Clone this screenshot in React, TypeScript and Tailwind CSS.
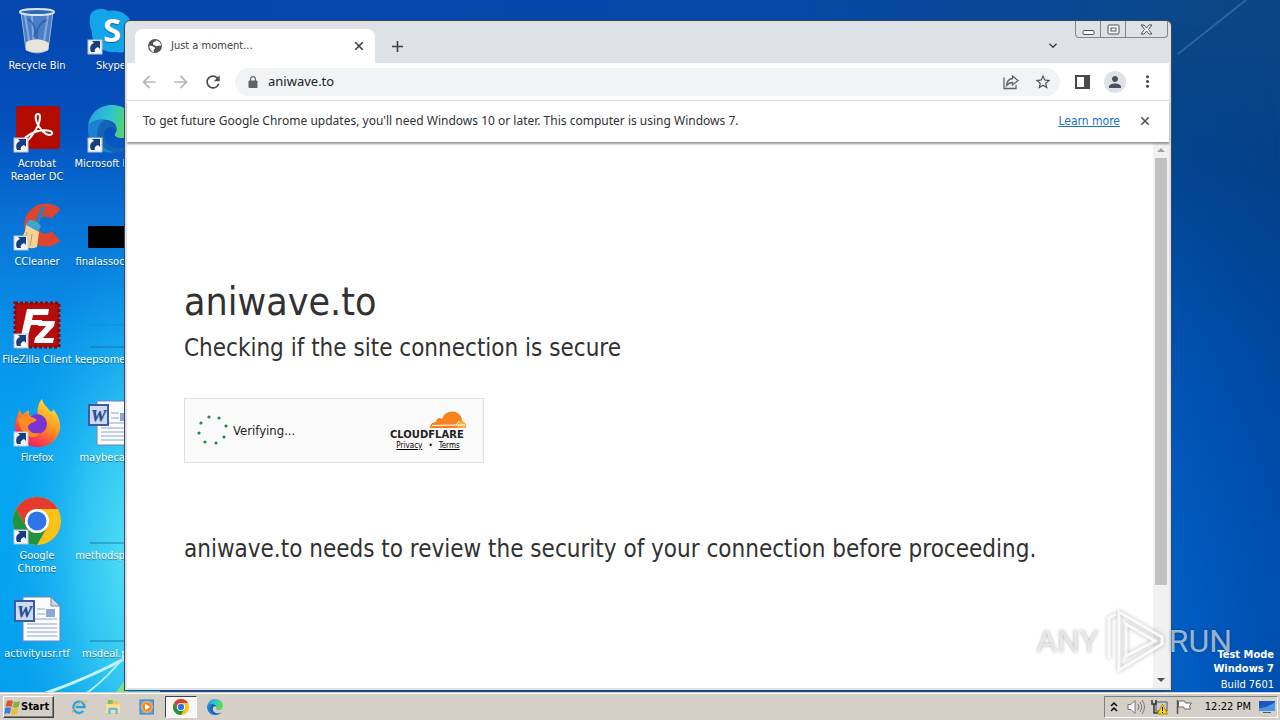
import type { ReactNode } from "react";
import {
  MdArrowBack,
  MdArrowForward,
  MdRefresh,
  MdStarBorder,
  MdPerson,
  MdMoreVert,
  MdAdd,
  MdExpandMore,
} from "react-icons/md";

function Wallpaper() {
  return (
    <svg className="absolute inset-0 h-full w-full" viewBox="0 0 1280 692" preserveAspectRatio="none" aria-hidden="true">
      <defs>
        <linearGradient id="left" x1="0" y1="0" x2="0" y2="1">
          <stop offset="0" stopColor="#0546ae" />
          <stop offset="0.18" stopColor="#0450bd" />
          <stop offset="0.32" stopColor="#0873d6" />
          <stop offset="0.5" stopColor="#0895ea" />
          <stop offset="0.68" stopColor="#05a6f1" />
          <stop offset="1" stopColor="#04a0ee" />
        </linearGradient>
        <linearGradient id="right" x1="0" y1="0" x2="0" y2="1">
          <stop offset="0" stopColor="#0b4787" />
          <stop offset="0.24" stopColor="#044087" />
          <stop offset="0.5" stopColor="#0048a0" />
          <stop offset="0.8" stopColor="#004fae" />
          <stop offset="1" stopColor="#0050b0" />
        </linearGradient>
        <linearGradient id="top" x1="0" y1="0" x2="1" y2="0">
          <stop offset="0" stopColor="#0546ae" />
          <stop offset="0.6" stopColor="#0548a6" />
          <stop offset="1" stopColor="#0b4787" />
        </linearGradient>
        <radialGradient id="cyan" cx="150" cy="560" r="330" gradientUnits="userSpaceOnUse" gradientTransform="translate(80 0) scale(0.45 1)">
          <stop offset="0" stopColor="#6cf0fa" stopOpacity="0.9" />
          <stop offset="0.45" stopColor="#40d2f4" stopOpacity="0.7" />
          <stop offset="1" stopColor="#10a0f0" stopOpacity="0" />
        </radialGradient>
        <linearGradient id="glow" x1="0" y1="0" x2="1" y2="0">
          <stop offset="0" stopColor="#0068d0" stopOpacity="0.7" />
          <stop offset="1" stopColor="#0060c8" stopOpacity="0" />
        </linearGradient>
        <linearGradient id="fade" x1="0" y1="0" x2="0" y2="1">
          <stop offset="0.1" stopColor="#fff" stopOpacity="0" />
          <stop offset="0.9" stopColor="#fff" />
        </linearGradient>
        <mask id="lower">
          <rect x="1165" width="115" height="692" fill="url(#fade)" />
        </mask>
      </defs>
      <rect width="900" height="692" fill="url(#left)" />
      <rect x="160" width="1120" height="692" fill="url(#right)" />
      <rect x="124" width="1100" height="26" fill="url(#top)" />
      <rect width="160" height="692" fill="url(#cyan)" />
      <rect x="1165" width="115" height="692" fill="url(#glow)" mask="url(#lower)" />
      <path d="M1178 54L1246 0" stroke="#4d83ae" strokeOpacity="0.5" strokeWidth="2" />
      <path d="M40 695Q85 680 130 656" stroke="#c4f5fc" strokeWidth="3" fill="none" />
      <path d="M84 695Q106 680 128 652" stroke="#b0f0fa" strokeWidth="2" fill="none" />
      <path d="M116 692l12 -16v16z" fill="#7fdc8a" />
      <path d="M90 325h34" stroke="#0e86d6" strokeWidth="1" strokeOpacity="0.5" />
    </svg>
  );
}

function ShortcutArrow() {
  return (
    <g>
      <rect x="1" y="33" width="14" height="14" fill="#f4f6fa" stroke="#b9c4d4" />
      <path d="M4 45c-2-5 0-8 3-9l-2-2h8v8l-2-2c-3 1-4 3-3 5z" fill="#173f80" />
    </g>
  );
}

function ChromeLogo() {
  return (
    <g>
      <circle cx="24" cy="24" r="24" fill="#fbc116" />
      <path d="M24 0A24 24 0 0 0 3.2 12L13.6 30A12 12 0 0 1 24 12H44.8A24 24 0 0 0 24 0z" fill="#e33b2e" />
      <path d="M3.2 12A24 24 0 0 0 24 48L34.4 30A12 12 0 0 1 13.6 30z" fill="#229342" />
      <circle cx="24" cy="24" r="12" fill="#fff" />
      <circle cx="24" cy="24" r="9.5" fill="#2f74e8" />
    </g>
  );
}

function EdgeLogo({ id }: { id: string }) {
  return (
    <g>
      <defs>
        <linearGradient id={id} x1="0" y1="0" x2="1" y2="0.2">
          <stop offset="0" stopColor="#2a9de0" />
          <stop offset="0.5" stopColor="#30c3d0" />
          <stop offset="1" stopColor="#5fdb4e" />
        </linearGradient>
      </defs>
      <path d="M1 22C2 8 13 0 25 0c13 0 23 9 23 20 0 8-6 13-13 13-5 0-8-2-7-4 4-5 1-13-8-14C11 14 4 17 1 22z" fill={`url(#${id})`} />
      <path d="M1 22c3-6 9-8 16-7 9 1 13 6 12 11-1-3-3-4-6-4-5 1-7 6-5 12 2 7 9 10 16 9 5 0 9-2 11-4-4 6-12 9-20 9C9 48 0 36 1 22z" fill="#1464b4" />
      <path d="M17 15c-7 5-9 15-4 23 4 6 10 9 16 9C9 50 0 36 1 22c3-6 9-8 16-7z" fill="#1b82d2" />
    </g>
  );
}

function WordDoc() {
  return (
    <g>
      <path d="M10 2h28l9 9v35H10z" fill="#fbfcff" stroke="#6f83b4" />
      <path d="M38 2v9h9z" fill="#cfd9ee" stroke="#6f83b4" />
      <path d="M24 14h8M24 19h8M14 24h30M14 29h30M14 33h30M14 37h30M14 41h30" stroke="#8ea0ce" />
      <rect x="33" y="14" width="9" height="8" fill="#8fa7d6" />
      <rect x="2" y="6" width="19" height="20" fill="#cddcf5" stroke="#3c5ba4" strokeWidth="2" />
      <text x="11.5" y="22" textAnchor="middle" fontSize="17" fontWeight="bold" fontStyle="italic" fontFamily="Liberation Serif, serif" fill="#244a9b">W</text>
    </g>
  );
}

const art: Record<string, ReactNode> = {
  bin: (
    <g>
      <path d="M8 5l5 38q11 6 22 0l5-38z" fill="#b7cfe8" fillOpacity="0.4" stroke="#9db6d4" />
      <path d="M12 8l5 32M19 9l2 34M35 8l-5 33" stroke="#e1ecf8" strokeOpacity="0.4" strokeWidth="2" />
      <path d="M15 12q10 7 6 18M34 13q-12 4-10 20" stroke="#1b5aa6" fill="none" strokeWidth="2" strokeOpacity="0.6" />
      <path d="M13 35q11-6 23 1l-1 7q-11 5-22 0z" fill="#e9e4d9" />
      <ellipse cx="24" cy="5" rx="17" ry="3" fill="#2a69b4" stroke="#dbe6f0" strokeWidth="2" />
    </g>
  ),
  acrobat: (
    <g>
      <rect x="3" y="1" width="44" height="43" rx="4" fill="#b30b00" />
      <path d="M25 9c-3 0-3 4-1 9 3 6 7 11 12 12 4 0 4-3 1-4-7-2-17 0-24 6-3 3 0 5 3 2 4-4 8-11 10-16 1-4 2-9-1-9z" fill="none" stroke="#fff" strokeWidth="2" />
      <ShortcutArrow />
    </g>
  ),
  ccleaner: (
    <g>
      <path d="M43 11A15 15 0 1 0 43 33" fill="none" stroke="#dc4631" strokeWidth="13" />
      <path d="M29 3l3 1-6 18-5-1z" fill="#2b80ba" />
      <path d="M16 17q7-1 12 6l-3 6-13-6z" fill="#3ca4cd" />
      <path d="M13 22l13 7-2 15q-9 4-20-5 8-5 9-17z" fill="#f3d396" />
      <path d="M14 29l-3 12M19 31l-2 12" stroke="#c69850" />
      <ShortcutArrow />
    </g>
  ),
  filezilla: (
    <g>
      <rect x="2" y="2" width="44" height="44" fill="#b70c0c" stroke="#8d0808" strokeWidth="3" strokeDasharray="3 2" />
      <path d="M14 8h22l-1 6H20l-1 5h10l-1 5H18l-3 11H8z" fill="#fff" />
      <path d="M26 20h16l-1 5-11 12h11l-1 5H21l1-5 11-12h-8z" fill="#fff" />
      <ShortcutArrow />
    </g>
  ),
  firefox: (
    <g>
      <defs>
        <linearGradient id="fox" x1="0.8" y1="0" x2="0.2" y2="1">
          <stop offset="0" stopColor="#ffe840" />
          <stop offset="0.45" stopColor="#ff9420" />
          <stop offset="0.75" stopColor="#fb4148" />
          <stop offset="1" stopColor="#e51278" />
        </linearGradient>
      </defs>
      <path d="M29 0c1 5 5 8 9 13 2-1 2-2 2-3 5 6 8 13 7 20C45 41 36 48 25 48 11 48 2 38 2 27c0-7 3-10 4-16l4 5c2-3 4-4 6-5v6c3-1 6 0 9 1-1-8 0-14 4-18z" fill="url(#fox)" />
      <circle cx="24" cy="25" r="10" fill="#7a35d0" />
      <path d="M5 20c6-5 12-3 18 0 2 3-6 3-8 7-1 5 5 9 11 7 1 4-9 6-14 1-4-4-6-8-7-15z" fill="#ff8a22" />
      <ShortcutArrow />
    </g>
  ),
  chrome: (
    <g>
      <ChromeLogo />
      <ShortcutArrow />
    </g>
  ),
  word: <WordDoc />,
  skype: (
    <g>
      <path d="M3 12C2 3 14-1 21 4c14-3 26 7 25 21 5 12-5 23-17 20C16 46 4 38 5 25 3 20 2 16 3 12z" fill="#12a5ec" />
      <text x="25" y="35" textAnchor="middle" fontSize="33" fontWeight="bold" fontFamily="Open Sans, sans-serif" fill="#fff">S</text>
      <ShortcutArrow />
    </g>
  ),
  edge: (
    <g>
      <EdgeLogo id="edge-desktop" />
      <ShortcutArrow />
    </g>
  ),
  black: <rect x="1" y="23" width="46" height="22" fill="#000" />,
  line: <path d="M3 46h44" stroke="#166a93" strokeOpacity="0.8" />,
};

const columns = [
  [
    { label: "Recycle Bin", icon: "bin" },
    { label: "Acrobat Reader DC", icon: "acrobat" },
    { label: "CCleaner", icon: "ccleaner" },
    { label: "FileZilla Client", icon: "filezilla" },
    { label: "Firefox", icon: "firefox" },
    { label: "Google Chrome", icon: "chrome" },
    { label: "activityusr.rtf", icon: "word" },
  ],
  [
    { label: "Skype", icon: "skype" },
    { label: "Microsoft Edge", icon: "edge" },
    { label: "finalassoc.png", icon: "black" },
    { label: "keepsome.png", icon: "line" },
    { label: "maybecar.rtf", icon: "word" },
    { label: "methodsp.png", icon: "line" },
    { label: "msdeal.png", icon: "line" },
  ],
];

function DesktopIcons() {
  return (
    <div className="relative flex pt-[7px]">
      {columns.map((items, c) => (
        <div key={c} className="flex w-[74px] flex-col">
          {items.map((item, i) => (
            <button
              key={item.label}
              type="button"
              className="flex h-[98px] w-full flex-col items-center text-[11px] leading-[13px] text-white [text-shadow:0_1px_1px_#0006]"
            >
              <svg width="48" height="48" viewBox="0 0 48 48" aria-hidden="true">
                {art[item.icon]}
              </svg>
              <span className={c === 1 || i === 3 || i === 6 ? "mt-1 whitespace-nowrap" : "mt-1 px-1"}>
                {item.label}
              </span>
            </button>
          ))}
        </div>
      ))}
    </div>
  );
}

function CloseIcon({ size }: { size: number }) {
  return (
    <svg width={size} height={size} viewBox="0 0 12 12" fill="none" stroke="currentColor" strokeWidth="2">
      <path d="M1.500 1.500l9 9M10.500 1.500l-9 9" />
    </svg>
  );
}

function WindowControls() {
  return (
    <div className="mr-[1px] flex h-[17px] items-stretch rounded-b border border-t-0 border-[#83868b] text-[#4b4f56]">
      <button type="button" aria-label="Minimize" className="flex w-6 items-center justify-center">
        <svg width="13" height="13" viewBox="0 0 13 13" fill="#fff" stroke="currentColor">
          <rect x="1" y="7.500" width="11" height="4" rx="1" />
        </svg>
      </button>
      <button type="button" aria-label="Maximize" className="flex w-[26px] items-center justify-center border-x border-[#83868b]">
        <svg width="13" height="13" viewBox="0 0 13 13" fill="#fff" stroke="currentColor">
          <rect x="1" y="2" width="11" height="9" rx="1" />
          <rect x="4" y="5" width="5" height="3" />
        </svg>
      </button>
      <button type="button" aria-label="Close" className="flex w-[41px] items-center justify-center">
        <svg width="13" height="13" viewBox="0 0 13 13" fill="#fff" stroke="currentColor">
          <path d="M1 2h3l2.500 3L9 2h3L8.500 6.500 12 11H9L6.500 8 4 11H1l3.500-4.500z" />
        </svg>
      </button>
    </div>
  );
}

function TabStrip() {
  return (
    <div className="flex h-[42px] items-end">
      <div className="ml-2 flex h-[34px] w-60 items-center rounded-t-lg bg-white pl-[13px]">
        <svg width="14" height="14" viewBox="0 0 14 14" aria-hidden="true">
          <circle cx="7" cy="7" r="7" fill="#505357" />
          <path d="M8 1.500c-1 2-3 1-3 3s2 1.500 3 2.500 2-1 3-.5 1.500 0 2 .3c0-3-2-5-5-5.300zM1.500 6.500c2 0 3 1 4.500 1.500s1.500 2-.5 2.500l.5 2.500c-3-.6-4.800-3-4.500-6.500z" fill="#fff" />
        </svg>
        <span className="ml-[9px] flex-1 text-[11px] text-[#3c4043]">Just a moment...</span>
        <button type="button" aria-label="Close tab" className="mr-2 flex h-4 w-4 items-center justify-center text-[#3c4043]">
          <CloseIcon size={10} />
        </button>
      </div>
      <button type="button" aria-label="New tab" className="ml-3 flex h-[34px] w-5 items-center justify-center text-[#3c4043]">
        <MdAdd size={19} />
      </button>
      <div className="flex flex-1 justify-end self-stretch">
        <button type="button" aria-label="Search tabs" className="mt-4 mr-[14px] flex h-4 w-4 items-center justify-center text-[#3c4043]">
          <MdExpandMore size={17} />
        </button>
        <WindowControls />
      </div>
    </div>
  );
}

function Toolbar() {
  return (
    <div className="flex h-[38px] items-center border-b border-[#d5d7da] bg-white text-[#5f6368]">
      <button type="button" aria-label="Back" className="ml-3 text-[#b4b6b8]">
        <MdArrowBack size={20} />
      </button>
      <button type="button" aria-label="Forward" className="ml-3 text-[#b4b6b8]">
        <MdArrowForward size={20} />
      </button>
      <button type="button" aria-label="Reload" className="ml-3 text-[#494c50]">
        <MdRefresh size={20} />
      </button>
      <div className="ml-3 flex h-7 flex-1 items-center rounded-full bg-[#f1f3f4] pl-[13px]">
        <svg width="10" height="12" viewBox="0 0 10 12" aria-hidden="true">
          <rect x="0.500" y="4.500" width="9" height="7.500" rx="1" fill="currentColor" />
          <path d="M2.500 5V3.200a2.500 2.500 0 0 1 5 0V5" fill="none" stroke="currentColor" strokeWidth="1.200" />
        </svg>
        <input
          type="text"
          aria-label="Address"
          defaultValue="aniwave.to"
          className="ml-[10px] min-w-0 flex-1 bg-transparent font-['Noto_Sans',sans-serif] text-[13px] text-[#202124] outline-none"
        />
        <button type="button" aria-label="Share" className="mr-[14px]">
          <svg width="18" height="18" viewBox="0 0 18 18" fill="none" stroke="currentColor" strokeWidth="1.300">
            <path d="M2 4.500v11h12v-3.500" />
            <path d="M10.500 3l5.500 4.500-5.500 4.500V9.500C7.500 9.500 6 10.500 4.500 12.500c.3-4 2.500-6.500 6-7z" />
          </svg>
        </button>
        <button type="button" aria-label="Bookmark this tab" className="mr-2 text-[#505357]">
          <MdStarBorder size={18} />
        </button>
      </div>
      <button type="button" aria-label="Side panel" className="ml-[15px] text-[#46494d]">
        <svg width="15" height="14" viewBox="0 0 15 14">
          <path d="M0 0h15v14H0zM2 2v10h7V2z" fill="currentColor" fillRule="evenodd" />
        </svg>
      </button>
      <button type="button" aria-label="Profile" className="ml-[14px] flex h-[22px] w-[22px] items-center justify-center rounded-full bg-[#dee1e6] text-[#46505f]">
        <MdPerson size={18} />
      </button>
      <button type="button" aria-label="Menu" className="mr-3 ml-3 text-[#46494d]">
        <MdMoreVert size={19} />
      </button>
    </div>
  );
}

function InfoBar() {
  return (
    <div className="relative flex h-[41px] items-center bg-white pr-[19px] pb-[1px] pl-4 text-[12px] text-[#303236] shadow-[0_2px_2px_#0006]">
      <p className="flex-1 font-['Noto_Sans',sans-serif]">
        To get future Google Chrome updates, you'll need Windows 10 or later. This computer is using Windows 7.
      </p>
      <a href="#learn" className="text-[#1a6dcc] underline">
        Learn more
      </a>
      <button type="button" aria-label="Dismiss" className="ml-5 text-[#505357]">
        <CloseIcon size={10} />
      </button>
    </div>
  );
}

function CloudflareLogo() {
  return (
    <svg width="78" height="29" viewBox="0 0 78 29" role="img" aria-label="Cloudflare">
      <path d="M41 17c0-4 3-6 6-6 0-4 4-5 6-3 2-6 8-9 14-7 4 2 6 5 6 9l-3 7z" fill="#f6821f" />
      <path d="M68 17l2-7c5-1 8 3 7 7z" fill="#fbad41" />
      <path d="M43 14.500l24-.5 3-4M67 14h9" stroke="#fff" strokeWidth="1" fill="none" />
      <text x="1" y="27" fontSize="10" fontWeight="bold" fontFamily="DejaVu Sans, sans-serif" fill="#222">CLOUDFLARE</text>
    </svg>
  );
}

const dots = [
  [14, 3],
  [24, 4],
  [31, 12],
  [29, 23],
  [21, 29],
  [10, 28],
  [4, 19],
  [6, 9],
];

function Challenge() {
  return (
    <div className="mt-8 flex h-[65px] w-[300px] items-center border border-[#e0e0e0] bg-[#fafafa] pl-[10px]">
      <svg width="34" height="34" viewBox="0 0 34 34" fill="#1f8a4c" aria-hidden="true">
        {dots.map(([x, y]) => (
          <circle key={x} cx={x} cy={y} r="1.600" />
        ))}
      </svg>
      <span className="ml-1 flex-1 text-[13px] text-[#232323]">Verifying...</span>
      <div className="mr-4 flex flex-col items-center pt-[2px]">
        <CloudflareLogo />
        <div className="flex items-center gap-[6px] text-[8px] leading-3 text-black">
          <a href="#privacy" className="underline">Privacy</a>
          <span>•</span>
          <a href="#terms" className="underline">Terms</a>
        </div>
      </div>
    </div>
  );
}

function Browser() {
  return (
    <section
      aria-label="Just a moment..."
      className="absolute top-5 right-[108px] bottom-[1px] left-[124px] flex flex-col overflow-hidden rounded-t-md border border-[#3c4650] bg-[#dee1e6] px-[2px] pb-[2px]"
    >
      <TabStrip />
      <Toolbar />
      <InfoBar />
      <div className="flex min-h-0 flex-1 bg-white">
        <main className="min-w-0 flex-1 overflow-hidden px-[57px] pt-[136px] text-[#313131]">
          <h1 className="text-[39px] leading-[48px]">aniwave.to</h1>
          <h2 className="mt-1 text-[24px] leading-9">Checking if the site connection is secure</h2>
          <Challenge />
          <p className="mt-[68px] text-[24px] leading-9">
            aniwave.to needs to review the security of your connection before proceeding.
          </p>
        </main>
        <div className="flex w-4 flex-col items-center bg-[#f1f1f1]">
          <svg width="16" height="16" viewBox="0 0 16 16" aria-hidden="true">
            <path d="M4 10l4-4 4 4z" fill="#a3a3a3" />
          </svg>
          <div className="flex min-h-0 w-3 flex-1 flex-col">
            <div className="h-[83%] bg-[#c1c1c1]" />
          </div>
          <svg width="16" height="16" viewBox="0 0 16 16" aria-hidden="true">
            <path d="M4 6l4 4 4-4z" fill="#505050" />
          </svg>
        </div>
      </div>
    </section>
  );
}

function Watermark() {
  return (
    <div className="pointer-events-none absolute right-[48px] bottom-[18px] flex items-center gap-1 font-['Roboto',sans-serif] text-[32px] leading-[66px] text-white/60 [text-shadow:0_0_3px_#0005]">
      <span>ANY</span>
      <svg width="62" height="66" viewBox="0 0 62 66" fill="none" stroke="#fff" strokeOpacity="0.85" strokeWidth="3" className="[filter:drop-shadow(0_0_2px_#0005)]">
        <path d="M16 58V4l43 25v7L16 62z" />
        <path d="M23 48V16l29 17z" />
        <path d="M6 50V10l7-4" />
      </svg>
      <span>RUN</span>
    </div>
  );
}

function StartFlag() {
  return (
    <svg width="17" height="17" viewBox="0 0 17 17" aria-hidden="true">
      <path d="M3 2q3-1.500 6 0L7.500 8q-3-1.500-6 0z" fill="#e8502c" />
      <path d="M10 2.500q3 1 6-.5L14.500 8q-3 1.500-6 .3z" fill="#7db83a" />
      <path d="M1.200 9q3-1.500 6 0l-1.500 6q-2.500-1.500-5.500 0z" fill="#3c7ed8" />
      <path d="M8.200 9.300q3 1.200 6-.3l-1.500 6q-3 1.500-6 .3z" fill="#f4bd28" />
    </svg>
  );
}

const launchers = [
  {
    label: "Internet Explorer",
    icon: (
      <g fill="none">
        <path d="M37 36A17 17 0 1 1 41 24H14" stroke="#2fa2e4" strokeWidth="7" />
        <path d="M5 43C-2 34 32 0 45 6c2 1 1 4-1 7" stroke="#e8b43a" strokeWidth="3" />
      </g>
    ),
  },
  {
    label: "Explorer",
    icon: (
      <g>
        <path d="M5 10h12l3-4h19v34H5z" fill="#e8c65c" />
        <path d="M9 3h14v12H9z" fill="#7fbf62" />
        <path d="M3 16h42v26H3z" fill="#f7e393" />
        <path d="M10 45V30q0-4 4-4h20q4 0 4 4v15h-7V33H17v12z" fill="#6eb7e2" />
      </g>
    ),
  },
  {
    label: "Media Player",
    icon: (
      <g>
        <rect x="3" y="3" width="40" height="42" fill="#6ca7d8" stroke="#3f7cb4" strokeWidth="3" />
        <circle cx="24" cy="24" r="16" fill="#f28a1c" stroke="#fbd9a8" strokeWidth="2" />
        <path d="M18 14l15 10-15 10z" fill="#fff" />
      </g>
    ),
  },
  { label: "Chrome", icon: <ChromeLogo />, active: true },
  { label: "Edge", icon: <EdgeLogo id="edge-task" /> },
];

function Taskbar() {
  return (
    <footer className="relative flex h-7 items-center border-t border-[#d4d0c8] bg-[#d4d0c8] pt-[1px] text-black shadow-[inset_0_1px_0_#fff]">
      <button
        type="button"
        className="ml-[3px] flex h-[22px] w-[51px] items-center border border-t-white border-r-[#404040] border-b-[#404040] border-l-white text-[11px] font-bold shadow-[inset_-1px_-1px_0_#808080]"
      >
        <StartFlag />
        Start
      </button>
      <nav className="ml-[9px] flex flex-1 items-center gap-[2px]">
        {launchers.map((l) => (
          <button
            key={l.label}
            type="button"
            aria-label={l.label}
            className={
              l.active
                ? "flex h-[22px] w-8 items-center justify-center border border-t-[#404040] border-r-white border-b-white border-l-[#404040] bg-[#f8f7f5]"
                : "flex h-[22px] w-8 items-center justify-center"
            }
          >
            <svg width="16" height="16" viewBox="0 0 48 48">{l.icon}</svg>
          </button>
        ))}
      </nav>
      <div className="mr-[2px] flex h-[22px] items-center border border-t-[#808080] border-r-white border-b-white border-l-[#808080] pr-[2px] pl-1">
        <svg width="10" height="12" viewBox="0 0 10 12" fill="none" stroke="#000" strokeWidth="1.500">
          <path d="M2 5l3-3 3 3M2 10l3-3 3 3" />
        </svg>
        <svg width="18" height="16" viewBox="0 0 18 16" fill="none" stroke="#777" className="ml-2">
          <path d="M1 5.500h3l4-4v13l-4-4H1z" fill="#fff" />
          <path d="M11 5q2 3 0 6M13 3q3.500 5 0 10M15 1q5 7 0 14" />
        </svg>
        <svg width="17" height="16" viewBox="0 0 17 16" className="ml-[6px]">
          <rect x="5" y="3" width="11" height="9" fill="#c9cdd2" stroke="#555" />
          <path d="M1 1v4h4V1M3 5v9h5" fill="none" stroke="#333" strokeWidth="1.500" />
          <path d="M11.500 5l5 10h-10z" fill="#ffd800" stroke="#b08b00" />
          <path d="M11.500 8v4M11.500 13v1" stroke="#000" />
        </svg>
        <svg width="17" height="16" viewBox="0 0 17 16" className="ml-2">
          <path d="M1.500 1v14" stroke="#555" strokeWidth="1.500" />
          <path d="M2.500 2h6l1 2h6l-2 3 1 3h-6l-1-2h-5z" fill="#fff" stroke="#666" />
        </svg>
        <time className="ml-3 text-[11px]">12:22 PM</time>
        <svg width="16" height="14" viewBox="0 0 16 14" className="ml-2">
          <path d="M0 1h16v10H0z" fill="#1f55b8" />
          <path d="M0 8Q8 8 16 2v9H0z" fill="#4b93e8" />
          <path d="M4 12h8v1H4z" fill="#555" />
        </svg>
      </div>
    </footer>
  );
}

export default function App() {
  return (
    <div className="flex h-screen flex-col overflow-hidden bg-[#0050b0] font-['DejaVu_Sans_Condensed','Noto_Sans',sans-serif]">
      <div className="relative min-h-0 flex-1 overflow-hidden">
        <Wallpaper />
        <DesktopIcons />
        <Browser />
        <Watermark />
        <div className="absolute right-[6px] bottom-0 text-right text-[11px] leading-[14px] text-white">
          <p className="font-bold">Test Mode</p>
          <p className="font-bold">Windows 7</p>
          <p className="pt-[2px]">Build 7601</p>
        </div>
      </div>
      <Taskbar />
    </div>
  );
}
